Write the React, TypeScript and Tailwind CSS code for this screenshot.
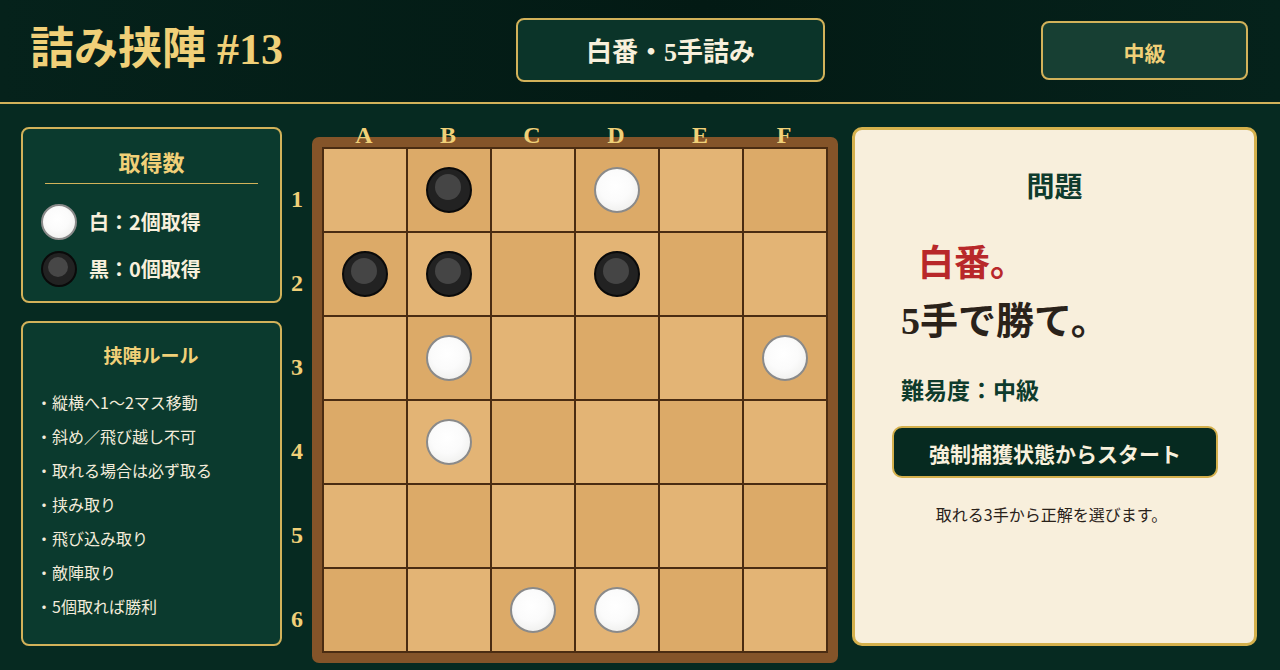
import React from "react";

const SERIF = { fontFamily: '"Liberation Serif", "Noto Sans CJK JP", serif' };
const SANS = { fontFamily: '"Noto Sans CJK JP", "Noto Sans", sans-serif' };

type P = "b" | "w" | null;
const board: P[][] = [
  [null, "b", null, "w", null, null],
  ["b", "b", null, "b", null, null],
  [null, "w", null, null, null, "w"],
  [null, "w", null, null, null, null],
  [null, null, null, null, null, null],
  [null, null, "w", "w", null, null],
];

function Stone({ c, size }: { c: "b" | "w"; size: "lg" | "sm" }) {
  if (c === "w") {
    return (
      <div
        className={
          (size === "lg" ? "w-[46px] h-[46px]" : "w-[36px] h-[36px]") +
          " rounded-full border-2 border-[#8a8a8a] bg-[radial-gradient(circle_at_45%_40%,#ffffff_0%,#fbfbfb_45%,#e9e9e6_100%)]"
        }
      />
    );
  }
  return (
    <div
      className={
        (size === "lg" ? "w-[46px] h-[46px]" : "w-[36px] h-[36px]") +
        " rounded-full border-2 border-[#0a0a0a] bg-[#222222] flex items-start justify-center"
      }
    >
      <div
        className={
          size === "lg"
            ? "w-[26px] h-[26px] rounded-full bg-[#454545] mt-[5px] -ml-[3px]"
            : "w-[20px] h-[20px] rounded-full bg-[#474747] mt-[4px] -ml-[2px]"
        }
      />
    </div>
  );
}

export default function App() {
  const cols = ["A", "B", "C", "D", "E", "F"];
  return (
    <div className="w-[1280px] h-[670px] overflow-hidden bg-[#062a21] flex flex-col" style={SANS}>
      {/* header */}
      <div className="h-[104px] shrink-0 border-b-2 border-[#d2b25a] bg-[linear-gradient(90deg,#05221b_0%,#031a14_55%,#05221b_100%)] flex items-center relative">
        <div className="pl-[30px] text-[44px] font-bold text-[#f0d078] leading-none pb-[2px]" style={SERIF}>
          詰み挟陣 #13
        </div>
        <div className="absolute left-[516px] top-[18px] w-[309px] h-[64px] rounded-[8px] border-2 border-[#d2b25a] bg-[#0b3429] flex items-center justify-center text-[26px] text-[#f8f0dc] font-semibold pt-[4px]" style={SERIF}>
          白番・5手詰み
        </div>
        <div className="absolute left-[1041px] top-[21px] w-[207px] h-[59px] rounded-[8px] border-2 border-[#d2b25a] bg-[#173f33] flex items-center justify-center text-[21px] text-[#f0d078] font-bold pt-[4px]">
          中級
        </div>
      </div>

      {/* main */}
      <div className="flex pt-[23px]">
        {/* left column */}
        <div className="ml-[21px] w-[261px] flex flex-col gap-[18px]">
          <div className="h-[176px] rounded-[8px] border-2 border-[#d2b25a] bg-[#0b3a2e] px-[22px] pt-[24px]">
            <div className="text-center text-[22px] font-bold text-[#f0d078] leading-none" style={SERIF}>
              取得数
            </div>
            <div className="mt-[8px] h-px bg-[#d2b25a]" />
            <div className="mt-[20px] flex items-center gap-[12px] -ml-[4px]">
              <Stone c="w" size="sm" />
              <span className="text-[20px] font-bold text-[#f8f0dc]">白：2個取得</span>
            </div>
            <div className="mt-[11px] flex items-center gap-[12px] -ml-[4px]">
              <Stone c="b" size="sm" />
              <span className="text-[20px] font-bold text-[#f8f0dc]">黒：0個取得</span>
            </div>
          </div>
          <div className="h-[325px] rounded-[8px] border-2 border-[#d2b25a] bg-[#0b3a2e] pl-[13px] pt-[24px]">
            <div className="text-center text-[19px] font-bold text-[#f0d078] leading-none pr-[14px]" style={SERIF}>
              挟陣ルール
            </div>
            <ul className="mt-[24px] flex flex-col gap-[10px] text-[16px] text-[#f3ecdb] leading-[24px]">
              {[
                "縦横へ1〜2マス移動",
                "斜め／飛び越し不可",
                "取れる場合は必ず取る",
                "挟み取り",
                "飛び込み取り",
                "敵陣取り",
                "5個取れば勝利",
              ].map((t) => (
                <li key={t}>・{t}</li>
              ))}
            </ul>
          </div>
        </div>

        {/* board */}
        <div className="ml-[30px] mt-[10px] relative">
          <div className="absolute left-0 right-0 -top-[17px] flex px-[10px] z-10">
            {cols.map((c) => (
              <div key={c} className="w-[84px] text-center text-[24px] font-bold leading-[30px] text-[#f0d078]" style={SERIF}>
                {c}
              </div>
            ))}
          </div>
          <div className="absolute -left-[30px] top-[20px] flex flex-col">
            {[1, 2, 3, 4, 5, 6].map((n) => (
              <div key={n} className="h-[84px] w-[30px] flex items-center justify-center text-[24px] font-bold text-[#f0d078]" style={SERIF}>
                {n}
              </div>
            ))}
          </div>
          <div className="w-[526px] h-[526px] rounded-[7px] bg-[#845429] p-[10px]">
            <div className="grid grid-cols-6 gap-[2px] bg-[#4a2c12] border-2 border-[#4a2c12]">
              {board.map((row, r) =>
                row.map((p, c) => (
                  <div
                    key={r + "-" + c}
                    className={
                      "w-[82px] h-[82px] flex items-center justify-center " +
                      ((r + c) % 2 === 0 ? "bg-[#e3b475]" : "bg-[#dcaa68]")
                    }
                  >
                    {p && <Stone c={p} size="lg" />}
                  </div>
                ))
              )}
            </div>
          </div>
        </div>

        {/* right panel */}
        <div className="ml-[14px] w-[405px] h-[519px] rounded-[10px] border-[3px] border-[#d4b04c] bg-[#f8efdc] flex flex-col pt-[44px]">
          <div className="text-center text-[28px] font-bold text-[#0e3b2c] leading-none" style={SERIF}>
            問題
          </div>
          <div className="mt-[44px] ml-[63px] text-[36px] font-bold text-[#b8282a] leading-none" style={SERIF}>
            白番。
          </div>
          <div className="mt-[20px] ml-[46px] text-[38px] font-bold text-[#2a221a] leading-none" style={SERIF}>
            5手で勝て。
          </div>
          <div className="mt-[38px] ml-[46px] text-[23px] font-bold text-[#0e3b2c] leading-none">
            難易度：中級
          </div>
          <div className="mt-[25px] ml-[37px] w-[326px] h-[52px] rounded-[10px] border-2 border-[#d4b04c] bg-[#062a20] flex items-center justify-center text-[21px] font-bold text-[#f8f0dc] pt-[3px]">
            強制捕獲状態からスタート
          </div>
          <div className="mt-[24px] text-center text-[16px] text-[#2a221a] pr-[6px]">
            取れる3手から正解を選びます。
          </div>
        </div>
      </div>
    </div>
  );
}
